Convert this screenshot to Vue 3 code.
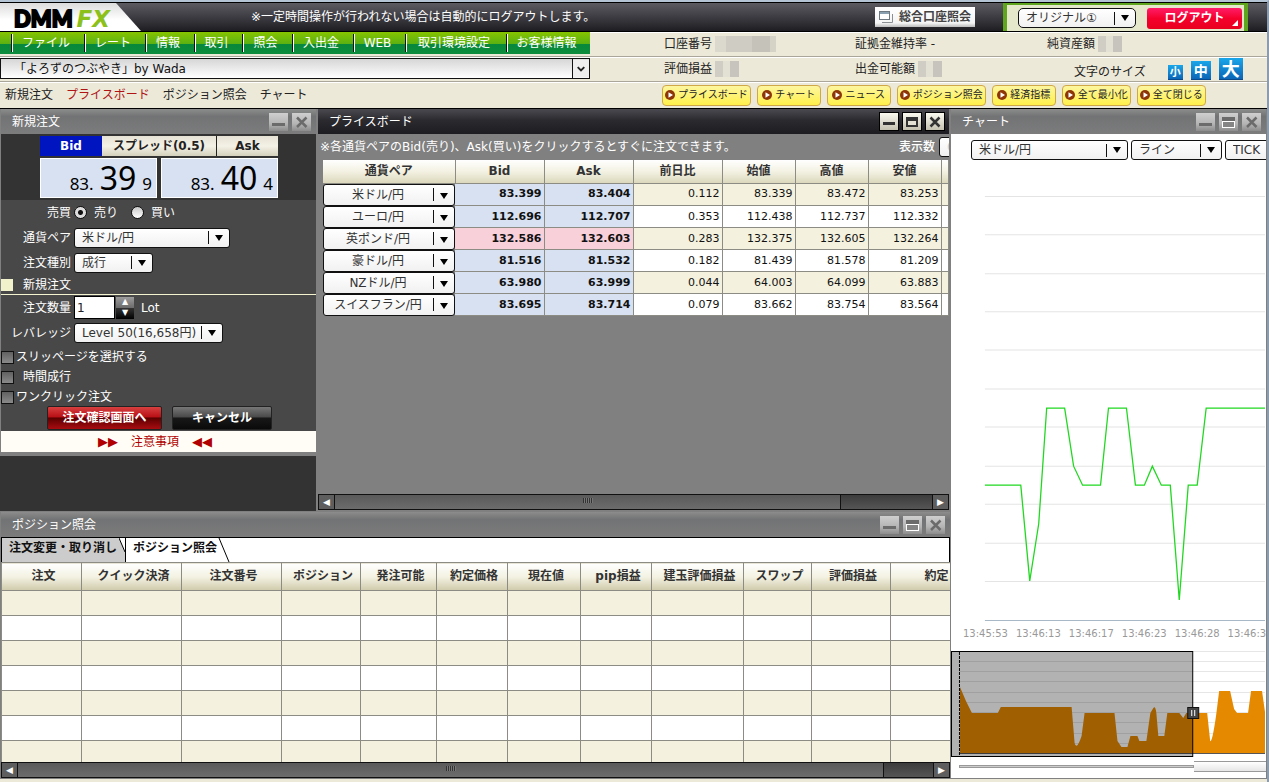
<script setup>
import { ref } from 'vue'

const menu = [
  { label: 'ファイル', width: 73 },
  { label: 'レート', width: 61 },
  { label: '情報', width: 49 },
  { label: '取引', width: 48 },
  { label: '照会', width: 50 },
  { label: '入出金', width: 61 },
  { label: 'WEB', width: 52 },
  { label: '取引環境設定', width: 101 },
  { label: 'お客様情報', width: 84 },
]
const links = ['新規注文', 'プライスボード', 'ポジション照会', 'チャート']
const shortcuts = ['プライスボード', 'チャート', 'ニュース', 'ポジション照会', '経済指標', '全て最小化', '全て閉じる']

const priceHeads = ['通貨ペア', 'Bid', 'Ask', '前日比', '始値', '高値', '安値']
const prices = [
  ['米ドル/円', '83.399', '83.404', '0.112', '83.339', '83.472', '83.253'],
  ['ユーロ/円', '112.696', '112.707', '0.353', '112.438', '112.737', '112.332'],
  ['英ポンド/円', '132.586', '132.603', '0.283', '132.375', '132.605', '132.264'],
  ['豪ドル/円', '81.516', '81.532', '0.182', '81.439', '81.578', '81.209'],
  ['NZドル/円', '63.980', '63.999', '0.044', '64.003', '64.099', '63.883'],
  ['スイスフラン/円', '83.695', '83.714', '0.079', '83.662', '83.754', '83.564'],
]
const updatedRow = 2

const positionCols = [
  { label: '注文', width: 80 },
  { label: 'クイック決済', width: 100 },
  { label: '注文番号', width: 100 },
  { label: 'ポジション', width: 79 },
  { label: '発注可能', width: 76 },
  { label: '約定価格', width: 71 },
  { label: '現在値', width: 73 },
  { label: 'pip損益', width: 71 },
  { label: '建玉評価損益', width: 92 },
  { label: 'スワップ', width: 68 },
  { label: '評価損益', width: 79 },
  { label: '約定日時', width: 112 },
]

const gridLines = [35, 73, 112, 150, 188, 227, 265, 304, 342, 381, 419]
const overviewLines = [0, 10, 20, 30, 41, 51, 61, 71, 82, 92]
const times = ['13:45:53', '13:46:13', '13:46:17', '13:46:23', '13:46:28', '13:46:33']

const side = ref('sell')
const lots = ref('1')
</script>

<template>
  <div class="app">
    <header class="topbar">
      <div class="logo"><span class="dmm">DMM</span><span class="fx">FX</span></div>
      <p class="notice">※一定時間操作が行われない場合は自動的にログアウトします。</p>
      <button class="account-btn" type="button">
        <svg width="14" height="12" viewBox="0 0 14 12" aria-hidden="true">
          <path d="M3 11.500H13.500V3" fill="none" stroke="#8a8f94" />
          <rect x="0.500" y="0.500" width="10" height="8" fill="#fff" stroke="#6d7880" />
          <rect x="1" y="1" width="9" height="2" fill="#8ba0b0" />
        </svg>
        総合口座照会
      </button>
      <div class="session">
        <span class="sel layout-sel">
          <select aria-label="レイアウト"><option>オリジナル①</option></select>
        </span>
        <button class="logout" type="button">ログアウト</button>
      </div>
    </header>

    <div class="band">
      <nav class="menu" aria-label="メインメニュー">
        <button v-for="m in menu" :key="m.label" type="button" :style="{ width: m.width + 'px' }">{{ m.label }}</button>
      </nav>
      <div class="stats">
        <span class="stat">口座番号 <i class="mask wide"></i></span>
        <span class="stat">証拠金維持率 -</span>
        <span class="stat">純資産額 <i class="mask"></i></span>
      </div>
    </div>

    <div class="band">
      <div class="ticker">
        <select aria-label="お知らせ"><option>「よろずのつぶやき」by Wada</option></select>
        <svg width="17" height="19" viewBox="0 0 17 19" aria-hidden="true">
          <rect width="17" height="19" fill="#eee" />
          <path d="M5 8l3.500 3.500L12 8" fill="none" stroke="#222" stroke-width="2" />
        </svg>
      </div>
      <div class="stats">
        <span class="stat">評価損益 <i class="mask"></i></span>
        <span class="stat">出金可能額 <i class="mask"></i></span>
        <span class="sizes">
          <span class="sizes-label">文字のサイズ</span>
          <button class="small" type="button">小</button>
          <button class="medium" type="button">中</button>
          <button class="large" type="button">大</button>
        </span>
      </div>
    </div>

    <div class="band tools">
      <nav class="links" aria-label="ウィンドウ">
        <a v-for="(l, i) in links" :key="l" href="#" :class="{ on: i === 1 }">{{ l }}</a>
      </nav>
      <div class="shortcuts">
        <button v-for="s in shortcuts" :key="s" type="button">
          <svg width="10" height="10" viewBox="0 0 10 10" aria-hidden="true">
            <circle cx="5" cy="5" r="5" fill="#8e3608" />
            <path d="M3.500 2.200L8 5L3.500 7.800Z" fill="#fff" />
          </svg>
          <span>{{ s }}</span>
        </button>
      </div>
    </div>

    <main class="workspace">
      <div class="order-cell">
        <section class="order">
          <div class="title">
            <h2>新規注文</h2>
            <button class="win" type="button" aria-label="最小化"><svg width="19" height="18" viewBox="0 0 19 18"><path d="M3 11.500H16" stroke="#6b6b6b" stroke-width="3" /></svg></button>
            <button class="win" type="button" aria-label="閉じる"><svg width="19" height="18" viewBox="0 0 19 18"><path d="M5 4.500L14.500 14M14.500 4.500L5 14" stroke="#6b6b6b" stroke-width="2.500" /></svg></button>
          </div>
          <div class="quote">
            <div class="quote-tabs">
              <span class="bid-tab">Bid</span><span class="spread">スプレッド(0.5)</span><span class="ask-tab">Ask</span>
            </div>
            <div class="quote-prices">
              <button type="button"><span>83.</span><b>39</b><span>9</span></button>
              <button type="button"><span>83.</span><b>40</b><span>4</span></button>
            </div>
          </div>
          <form class="form" @submit.prevent>
            <div class="row">
              <span class="lab">売買</span>
              <label class="radio"><input v-model="side" type="radio" value="sell" name="side">売り</label>
              <label class="radio"><input v-model="side" type="radio" value="buy" name="side">買い</label>
            </div>
            <div class="row">
              <label class="lab" for="pair">通貨ペア</label>
              <span class="sel pair"><select id="pair"><option>米ドル/円</option></select></span>
            </div>
            <div class="row">
              <label class="lab" for="kind">注文種別</label>
              <span class="sel kind"><select id="kind"><option>成行</option></select></span>
            </div>
            <h3>新規注文</h3>
            <div class="row">
              <label class="lab" for="lots">注文数量</label>
              <input id="lots" v-model="lots" class="lots" type="text">
              <span class="spin">
                <button type="button" aria-label="増やす">▲</button>
                <button type="button" aria-label="減らす">▼</button>
              </span>
              <span class="unit">Lot</span>
            </div>
            <div class="row">
              <label class="lab" for="lev">レバレッジ</label>
              <span class="sel lev"><select id="lev"><option>Level 50(16,658円)</option></select></span>
            </div>
            <div class="checks">
              <label><input type="checkbox">スリッページを選択する</label>
              <label class="inset"><input type="checkbox">時間成行</label>
              <label><input type="checkbox">ワンクリック注文</label>
            </div>
            <div class="actions">
              <button class="confirm" type="submit">注文確認画面へ</button>
              <button class="cancel" type="button">キャンセル</button>
            </div>
          </form>
          <a class="caution" href="#"><span>▶▶</span>注意事項<span>◀◀</span></a>
        </section>
      </div>

      <section class="board">
        <div class="title active">
          <h2>プライスボード</h2>
          <button class="win" type="button" aria-label="最小化"><svg width="18" height="17" viewBox="0 0 18 17"><path d="M3 10.500H15" stroke="#333" stroke-width="3" /></svg></button>
          <button class="win" type="button" aria-label="最大化"><svg width="18" height="17" viewBox="0 0 18 17"><rect x="3" y="4" width="12" height="10" fill="#333" /><rect x="5" y="8" width="8" height="4" fill="#e4e2d4" /></svg></button>
          <button class="win" type="button" aria-label="閉じる"><svg width="18" height="17" viewBox="0 0 18 17"><path d="M4.500 4.500L13.500 13.500M13.500 4.500L4.500 13.500" stroke="#333" stroke-width="2.500" /></svg></button>
        </div>
        <div class="board-note">
          <p>※各通貨ペアのBid(売り)、Ask(買い)をクリックするとすぐに注文できます。</p>
          <label for="count">表示数</label>
          <span class="count-clip"><span class="sel count"><select id="count"><option>6</option></select></span></span>
        </div>
        <table class="prices">
          <colgroup>
            <col class="c-pair"><col class="c-rate"><col class="c-rate"><col class="c-rate">
            <col class="c-val"><col class="c-val"><col class="c-val"><col>
          </colgroup>
          <thead>
            <tr><th v-for="h in priceHeads" :key="h" scope="col">{{ h }}</th><th></th></tr>
          </thead>
          <tbody>
            <tr v-for="(p, r) in prices" :key="p[0]">
              <th scope="row"><span class="sel"><select :aria-label="p[0]"><option>{{ p[0] }}</option></select></span></th>
              <td v-for="(v, c) in p.slice(1)" :key="c" :class="{ rate: c < 2, hot: c < 2 && r === updatedRow }">{{ v }}</td>
              <td></td>
            </tr>
          </tbody>
        </table>
        <div class="scroll">
          <button type="button" aria-label="左へ">◀</button>
          <div class="thumb board-thumb"><i></i></div>
          <div class="rest board-rest"></div>
          <button type="button" aria-label="右へ">▶</button>
        </div>
      </section>

      <section class="chart">
        <div class="title">
          <h2>チャート</h2>
          <button class="win" type="button" aria-label="最小化"><svg width="19" height="18" viewBox="0 0 19 18"><path d="M3 11.500H16" stroke="#6b6b6b" stroke-width="3" /></svg></button>
          <button class="win" type="button" aria-label="最大化"><svg width="19" height="18" viewBox="0 0 19 18"><rect x="3" y="4" width="13" height="11" fill="#6b6b6b" /><rect x="3.500" y="8.500" width="12" height="6" fill="#858585" stroke="#fff" /></svg></button>
          <button class="win" type="button" aria-label="閉じる"><svg width="19" height="18" viewBox="0 0 19 18"><path d="M5 4.500L14.500 14M14.500 4.500L5 14" stroke="#6b6b6b" stroke-width="2.500" /></svg></button>
        </div>
        <div class="chart-tools">
          <span class="sel c-sym"><select aria-label="通貨ペア"><option>米ドル/円</option></select></span>
          <span class="sel c-type"><select aria-label="種類"><option>ライン</option></select></span>
          <span class="sel c-tick"><select aria-label="足"><option>TICK</option></select></span>
        </div>
        <svg class="plot" viewBox="0 0 316 464" preserveAspectRatio="none" role="img" aria-label="米ドル/円 ライン">
          <path v-for="y in gridLines" :key="y" :d="`M34 ${y + 0.5}H315`" stroke="#e4e4e4" />
          <path d="M34 458.500H315" stroke="#a9b8c6" />
          <polyline
            points="34,323.500 70,323.500 79,419 88,362 96,246.500 114,246.500 123,304.500 132,323.500 150,323.500 158,246.500 176,246.500 185,323.500 194,323.500 202,304.500 211,323.500 220,323.500 229,438 238,323.500 247,323.500 256,246.500 315,246.500"
            fill="none" stroke="#21d821" stroke-width="1.300" />
        </svg>
        <div class="times"><span v-for="t in times" :key="t">{{ t }}</span></div>
        <svg class="overview" viewBox="0 0 316 107" preserveAspectRatio="none" role="img" aria-label="表示範囲">
          <path v-for="y in overviewLines" :key="y" :d="`M8 ${y + 0.500}H315`" stroke="#e6e6e6" />
          <path
            d="M9 36L15 50L21 62H47L50 56H121L124 92Q126 100 131 85L134 62H164L167 90L171 96H177L180 85H187L189 90H196L200 62L203 57Q205 54 206 62L208 85H214L217 62H229L233 67L236 62H257L260 90Q262 92 266 64L269 40H280L284 58L287 62H298L301 40H312L315 61V102H9Z"
            fill="#e58900" />
          <path d="M8 102.500H315" stroke="#555" />
          <rect x="0.500" y="0.500" width="242" height="105" fill="#000" fill-opacity="0.300" stroke="#000" />
          <path d="M8.500 1V104" stroke="#000" stroke-dasharray="3 1" />
          <rect x="237.500" y="56.500" width="11" height="11" fill="#444" stroke="#111" />
          <path d="M241.500 59V65M244.500 59V65" stroke="#fff" />
        </svg>
        <div class="range"><i class="rail"></i><i class="knob"></i></div>
      </section>

      <section class="positions">
        <div class="title">
          <h2>ポジション照会</h2>
          <button class="win" type="button" aria-label="最小化"><svg width="19" height="18" viewBox="0 0 19 18"><path d="M3 11.500H16" stroke="#6b6b6b" stroke-width="3" /></svg></button>
          <button class="win" type="button" aria-label="最大化"><svg width="19" height="18" viewBox="0 0 19 18"><rect x="3" y="4" width="13" height="11" fill="#6b6b6b" /><rect x="3.500" y="8.500" width="12" height="6" fill="#858585" stroke="#fff" /></svg></button>
          <button class="win" type="button" aria-label="閉じる"><svg width="19" height="18" viewBox="0 0 19 18"><path d="M5 4.500L14.500 14M14.500 4.500L5 14" stroke="#6b6b6b" stroke-width="2.500" /></svg></button>
        </div>
        <div class="tabs">
          <button class="tab off" type="button">
            注文変更・取り消し
            <svg width="6" height="24" viewBox="0 0 6 24" aria-hidden="true"><path d="M0 0L6 14V0Z" fill="#fff" /><path d="M0 0L6 14" stroke="#000" /></svg>
          </button>
          <button class="tab" type="button">
            ポジション照会
            <svg width="13" height="24" viewBox="0 0 13 24" aria-hidden="true"><path d="M2 0L12 24" stroke="#000" /></svg>
          </button>
        </div>
        <div class="grid-wrap">
          <table class="grid">
            <colgroup><col v-for="c in positionCols" :key="c.label" :style="{ width: c.width + 'px' }"></colgroup>
            <thead><tr><th v-for="c in positionCols" :key="c.label" scope="col">{{ c.label }}</th></tr></thead>
            <tbody>
              <tr v-for="n in 7" :key="n"><td v-for="c in positionCols" :key="c.label"></td></tr>
            </tbody>
          </table>
        </div>
        <div class="scroll">
          <button type="button" aria-label="左へ">◀</button>
          <div class="thumb pos-thumb"><i></i></div>
          <div class="rest pos-rest"></div>
          <button type="button" aria-label="右へ">▶</button>
        </div>
      </section>
    </main>
  </div>
</template>

<style>
html, body { background: #ece9d8; }
</style>

<style scoped>
.app, .app * { box-sizing: border-box; }
.app {
  display: flex; flex-direction: column; height: 100vh; min-height: 640px;
  padding-bottom: 3px; overflow: hidden;
  border-top: 2px solid #b4c4d4; border-right: 2px solid #8b9cae;
  background: #ece9d8; color: #222;
  font: 12px/16px "DejaVu Sans", "Noto Sans CJK JP", sans-serif;
}
button, select, input { font: inherit; color: inherit; margin: 0; padding: 0; border: 0; border-radius: 0; background: none; }
h2, h3, p { margin: 0; font-size: 12px; font-weight: 400; }
a { color: inherit; text-decoration: none; }
button { white-space: nowrap; }
svg { display: block; flex: none; }

/* drop-downs */
.sel { position: relative; display: block; height: 20px; flex: none; }
.sel select {
  appearance: none; display: block; width: 100%; height: 100%; padding: 0 24px 0 7px;
  border: 1px solid #111; border-radius: 3px; color: #333;
  background: linear-gradient(#111, #111) right 20px center / 1px 13px no-repeat, linear-gradient(#fff, #f1f1f1);
}
.sel::after {
  content: ""; position: absolute; right: 7px; top: 7px; pointer-events: none;
  border: 4px solid transparent; border-top: 6px solid #000; border-bottom: 0;
}

/* top bar */
.topbar {
  display: flex; align-items: center; height: 30px; flex: none; color: #fff;
  border-top: 1px solid #000; border-bottom: 1px solid #000;
  background: linear-gradient(#5c5b61, #3a393f 55%, #1e1e22);
}
.logo {
  display: flex; align-items: center; gap: 4px; width: 141px; height: 28px; padding: 4px 0 0 14px; margin-right: 110px; flex: none;
  line-height: 24px; background: linear-gradient(#dcdcdc, #fff 60%);
  clip-path: polygon(0 0, 116px 0, 141px 100%, 0 100%);
}
.dmm { font-family: Lato, sans-serif; font-weight: 900; font-size: 22px; color: #000; -webkit-text-stroke: 2px #000; }
.fx { font-family: "DejaVu Sans", sans-serif; font-weight: 700; font-style: italic; font-size: 23px; color: #8cc11c; }
.notice { white-space: nowrap; }
.account-btn {
  display: flex; align-items: center; justify-content: center; gap: 6px; width: 100px; height: 20px; margin-left: auto; flex: none;
  color: #444; font-weight: 700; background: linear-gradient(#fff, #f4f4f4 80%, #bbb);
}
.session {
  display: flex; align-items: center; height: 28px; margin: 0 19px 0 28px; padding: 0 2px 0 11px; flex: none;
  border: solid #5fa51e; border-width: 2px 4px 0 4px; background: #e6e8cc;
}
.layout-sel { width: 118px; }
.layout-sel select { border-radius: 5px; }
.logout {
  position: relative; width: 95px; height: 21px; margin-left: 11px; border-radius: 3px; color: #fff; font-weight: 700;
  background: linear-gradient(#ff1d68, #f5002c 50%, #e8001f);
}
.logout::after { content: ""; position: absolute; right: 4px; bottom: 3px; border: 3px solid #fff; border-top-color: transparent; border-left-color: transparent; }

/* account bands */
.band { display: flex; height: 25px; flex: none; border-bottom: 1px solid #aaa79a; box-shadow: inset 0 1px #fff; }
.menu {
  display: flex; align-items: flex-start; width: 590px; height: 22px; padding: 2px 0 0 11px; flex: none; color: #fff;
  background: linear-gradient(#86c400, #5bb112 54%, #07883a 55%, #0c8c3c);
}
.menu button { height: 18px; padding-right: 4px; border-left: 1px solid #111; box-shadow: inset 1px 0 #fff; }
.stats { display: grid; grid-template-columns: 191px 192px auto; align-items: center; padding-left: 74px; white-space: nowrap; }
.stat { display: flex; align-items: center; gap: 3px; }
.mask { display: block; width: 24px; height: 16px; background: linear-gradient(90deg, #d0cec4 33%, #e3e0d4 33% 62%, #c6c4bc 62%); }
.mask.wide { width: 61px; background: linear-gradient(90deg, #dbd9cd 18%, #cfcdc3 18% 60%, #c4c2b9 60% 90%, #d5d2c6 90%); }
.ticker { position: relative; width: 590px; height: 21px; margin-top: 1px; flex: none; }
.ticker select {
  appearance: none; width: 100%; height: 100%; padding-left: 13px; border: 1px solid #111; color: #111;
  background: linear-gradient(#111, #111) right 16px top / 1px 100% no-repeat, linear-gradient(#d6d6d6, #fff);
}
.ticker svg { position: absolute; right: 1px; top: 1px; width: 16px; pointer-events: none; }
.sizes { display: flex; align-items: flex-end; gap: 8px; padding-left: 27px; }
.sizes-label { margin: 0 14px 0 0; }
.sizes button { color: #fff; font-weight: 700; background: linear-gradient(#1aa6ea, #0a62b4); box-shadow: inset 0 -1px #084a8c; }
.sizes .small { width: 15px; height: 15px; font-size: 11px; line-height: 14px; }
.sizes .medium { width: 20px; height: 19px; font-size: 14px; line-height: 18px; }
.sizes .large { width: 24px; height: 22px; font-size: 18px; line-height: 21px; }
.tools { height: 27px; border-bottom: 1px solid #000; }
.links { display: flex; align-items: center; gap: 13px; width: 662px; padding-left: 5px; flex: none; }
.links .on { color: #b01414; }
.shortcuts { display: flex; align-items: center; gap: 6px; color: #222; }
.shortcuts button {
  display: flex; align-items: center; justify-content: center; gap: 3px; height: 21px; padding: 0 2px; min-width: 64px;
  border: 1px solid #d0a848; border-radius: 4px; background: linear-gradient(#fdf6a0, #fff04a); font-size: 10px;
}

/* windows */
.workspace {
  flex: 1; min-height: 0; display: grid; grid-template-columns: 317px minmax(0, 1fr) 316px;
  grid-template-rows: minmax(0, 3fr) minmax(0, 2fr); background: #333;
}
.title {
  display: flex; align-items: center; gap: 4px; height: 25px; padding: 0 5px 0 11px; flex: none; color: #fff;
  background: linear-gradient(#8c8c8c, #727374 30%, #7c7c7d);
}
.title h2 { flex: 1; }
.title.active { padding: 0 4px 0 11px; gap: 3px; background: linear-gradient(#4a4a50, #2a2a2f 45%, #1d1d21); }
.win { width: 19px; height: 18px; background: linear-gradient(#cfcfcf, #b4b4b4 60%, #8c8c8c); }
.active .win { width: 20px; height: 19px; border: 1px solid #000; background: linear-gradient(#fbfaf0, #c4c1b0); }

/* order form */
.order-cell { background: #333; border-right: 1px solid #808080; min-height: 0; overflow: hidden; }
.order { display: flex; flex-direction: column; color: #fff; background: #484848; border-left: 1px solid #808080; border-bottom: 4px solid #808080; }
.quote { display: flex; flex-direction: column; gap: 2px; padding: 2px 38px 2px 39px; background: #333; }
.quote-tabs { display: flex; height: 20px; line-height: 20px; font-weight: 700; text-align: center; color: #222; background: linear-gradient(#e6e2d4, #f4f1e6 50%, #d5d1bd); }
.bid-tab { width: 62px; color: #fff; background: #0014c0; }
.spread { flex: 1; border-right: 1px solid #222; }
.ask-tab { width: 61px; }
.quote-prices { display: grid; grid-template-columns: 1fr 1fr; gap: 4px; font-family: "Noto Sans", sans-serif; }
.quote-prices button { display: flex; align-items: baseline; justify-content: flex-end; gap: 6px; height: 40px; padding-right: 4px; border: 1px solid #fff; color: #000; background: #d7e1f1; font-family: inherit; }
.quote-prices span { font-size: 17px; line-height: 38px; }
.quote-prices b { font-size: 32px; line-height: 38px; font-weight: 400; }
.row { display: flex; align-items: center; height: 25px; }
.lab { width: 70px; margin-right: 3px; text-align: right; flex: none; }
.radio { display: flex; align-items: center; gap: 7px; margin-right: 13px; }
.radio input { appearance: none; width: 13px; height: 13px; border: 1px solid #111; border-radius: 50%; background: linear-gradient(#c8c8c8, #fff); }
.radio input:checked { background: radial-gradient(circle, #111 2px, #ddd 3px); }
.pair { width: 156px; }
.kind { width: 79px; }
.lev { width: 149px; }
.form h3 { display: flex; align-items: center; height: 20px; border-bottom: 1px solid #f3f3cf; }
.form h3::before { content: ""; width: 12px; height: 12px; margin-right: 10px; background: #f1f1cc; }
.lots { width: 41px; height: 23px; padding: 0 2px; border: 1px solid #000; color: #222; background: #fff; }
.spin { display: flex; flex-direction: column; width: 18px; margin: 0 7px 0 1px; }
.spin button { height: 11px; font-size: 8px; line-height: 10px; color: #fff; background: linear-gradient(#9c9c9c, #6b6b6b); }
.spin button + button { background: linear-gradient(#333, #000); }
.checks { display: flex; flex-direction: column; gap: 4px; padding: 4px 0 0; }
.checks label { display: flex; align-items: center; gap: 2px; height: 16px; }
.checks .inset { gap: 9px; }
.checks input { appearance: none; width: 13px; height: 13px; border: 1px solid #111; background: linear-gradient(#606060, #8a8a8a); }
.actions { display: flex; gap: 10px; padding: 1px 0 1px 46px; }
.actions button { height: 24px; border: 1px solid #222; border-radius: 2px; font-weight: 700; color: #fff; }
.confirm { width: 115px; background: linear-gradient(#d84040, #b81016 45%, #5c0000 50%, #a80c10); }
.cancel { width: 100px; background: linear-gradient(#777, #4a4a4a 45%, #181818 50%, #0a0a0a); }
.caution { display: flex; align-items: center; justify-content: center; gap: 13px; height: 21px; padding-right: 7px; color: #b00000; background: #fffdf5; }
.caution span { font-size: 13px; }

/* price board */
.board { display: flex; flex-direction: column; min-height: 0; overflow: hidden; background: #808080; border: solid #808080; border-width: 0 2px 1px 1px; }
.board-note { display: flex; align-items: center; height: 26px; padding-left: 2px; flex: none; color: #fff; white-space: nowrap; }
.board-note p { flex: 1; }
.board-note label { margin-right: 4px; font-weight: 500; }
.count-clip { width: 10px; overflow: hidden; }
.count { width: 50px; }
.count select { color: #ccc; }
.prices { width: calc(100% - 5px); margin-left: 5px; table-layout: fixed; border-collapse: collapse; }
.c-pair { width: 132px; }
.c-rate { width: 89px; }
.c-val { width: 73px; }
.prices th, .prices td { height: 22px; padding: 0; border: 1px solid #8c8c84; border-top: 0; border-left: 0; line-height: 14px; }
.prices thead th { height: 23px; color: #333; font-weight: 700; background: linear-gradient(#fff, #f3f1e2 50%, #dcd8bd); }
.prices tbody th { border: 0; font-weight: 400; }
.prices td { padding-right: 2px; text-align: right; vertical-align: middle; color: #111; background: #fff; font-size: 11px; }
.prices tr:nth-child(odd) td { background: #f4f1df; }
.prices tr td.rate { font-weight: 700; background: #d7e1f1; }
.prices tr td.hot { background: #f7d0da; }
.prices .sel { height: 22px; }
.prices select { padding: 0 22px 0 0; text-align: center; text-align-last: center; }
.prices .sel::after { top: 9px; }
.scroll { display: flex; height: 16px; margin-top: auto; flex: none; border: 1px solid #111; background: #4d4d4d; }
.scroll button { width: 15px; font-size: 9px; line-height: 14px; color: #fff; background: #5e5e5e; }
.thumb { display: flex; justify-content: center; border: solid #111; border-width: 0 1px; background: linear-gradient(#5a5a5a, #6c6c6c); }
.thumb i { width: 10px; height: 5px; margin-top: 3px; background: repeating-linear-gradient(90deg, #333 0 1px, #777 1px 2px); }
.board-thumb { flex: 508; }
.board-rest { flex: 91; }
.pos-thumb { flex: 867; }
.pos-rest { flex: 49; }
.rest { border-right: 1px solid #111; background: linear-gradient(#3c3c3c, #555); }

/* chart */
.chart { grid-column: 3; grid-row: 1 / 3; display: flex; flex-direction: column; min-height: 0; overflow: hidden; background: #fff; border-right: 1px solid #808080; border-bottom: 1px solid #808080; }
.chart-tools { display: flex; gap: 3px; padding: 6px 0 1px 20px; overflow: hidden; flex: none; }
.c-sym { width: 157px; }
.c-type { width: 91px; }
.c-tick { width: 80px; }
.plot { width: 100%; flex: 1; min-height: 0; }
.times { display: flex; gap: 8px; height: 18px; padding-left: 12px; margin-bottom: 7px; overflow: hidden; flex: none; color: #999; font-size: 10px; }
.overview { width: 100%; height: 107px; flex: none; }
.range { display: flex; align-items: center; height: 16px; margin-bottom: 4px; padding-left: 8px; flex: none; }
.rail { flex: 235; height: 3px; border: 1px solid #999; background: #ccc; }
.knob { flex: 72; height: 11px; border: solid #999; border-width: 1px 0; background: linear-gradient(#fff, #e6e6e6); }

/* positions */
.positions { grid-column: 1 / 3; grid-row: 2; display: flex; flex-direction: column; min-height: 0; overflow: hidden; background: #fff; border: solid #808080; border-width: 1px 1px 1px 1px; }
.tabs { display: flex; height: 25px; flex: none; border: 1px solid #000; border-bottom: 0; background: #fff; }
.tab { display: flex; align-items: flex-start; padding-left: 7px; line-height: 21px; font-weight: 700; color: #111; }
.tab.off { width: 124px; justify-content: space-between; border-right: 1px solid #000; background: #ccc; }
.grid-wrap { flex: 1; min-height: 0; overflow: hidden; }
.grid { width: calc(100% + 52px); table-layout: fixed; border-collapse: collapse; }
.grid th, .grid td { height: 25px; padding: 0; border: 1px solid #8c8c84; }
.grid thead th { height: 28px; padding: 0 0 2px 4px; color: #333; font-weight: 700; background: linear-gradient(#fff, #f3f1e2 50%, #cfcaab); }
.grid tbody tr:nth-child(odd) td { background: #f4f1df; }
</style>
